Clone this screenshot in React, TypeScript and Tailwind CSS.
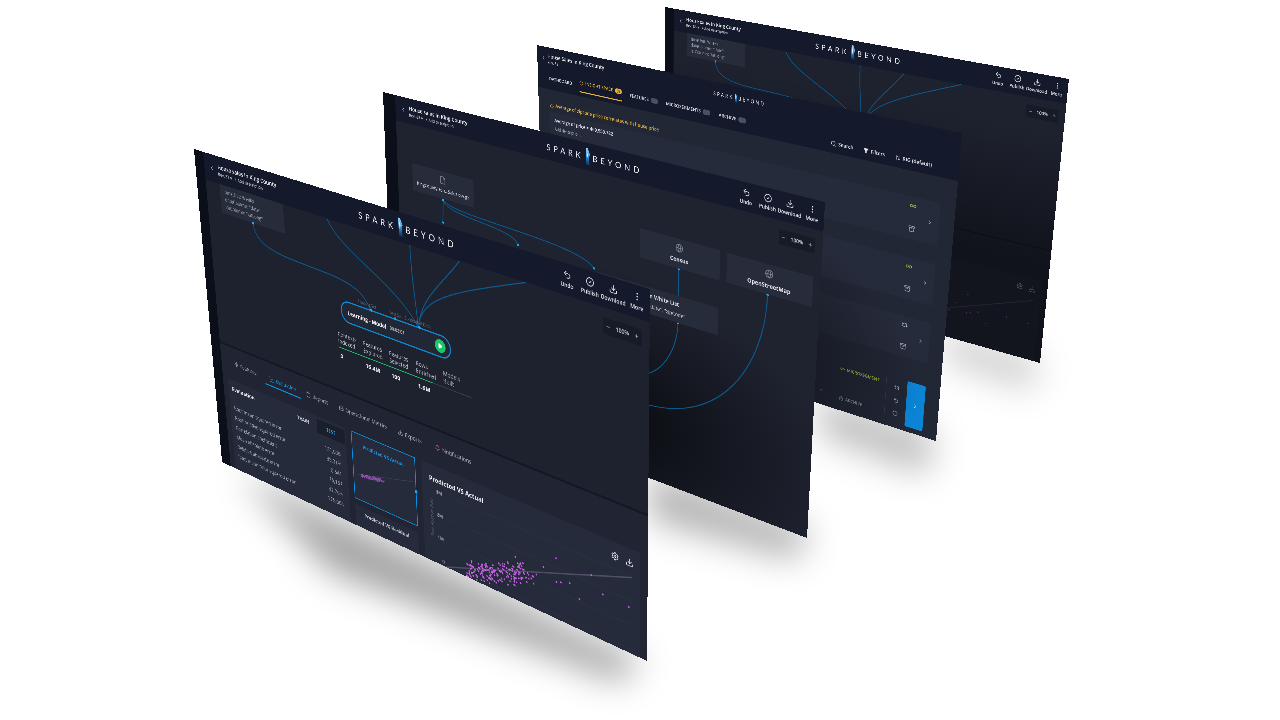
import type { ReactNode } from "react";
import {
  Archive, ArrowUpDown, Bell, ChartLine, ChevronDown, ChevronLeft, ChevronRight, CircleCheck, Clipboard,
  Diamond, Download, EllipsisVertical, File, Funnel, Globe, HardDrive, Infinity as Loop, Minus, Play, Plus,
  Repeat2, RotateCcw, Search, Settings, Undo2, Zap,
} from "lucide-react";

type Pt = [number, number];

// maps the 1280x800 screen on to four corners of the picture
function quadMatrix([p0, p1, p2, p3]: Pt[]) {
  const sx = p0[0] - p1[0] + p2[0] - p3[0];
  const sy = p0[1] - p1[1] + p2[1] - p3[1];
  const dx1 = p1[0] - p2[0];
  const dx2 = p3[0] - p2[0];
  const dy1 = p1[1] - p2[1];
  const dy2 = p3[1] - p2[1];
  const det = dx1 * dy2 - dx2 * dy1;
  const g = (sx * dy2 - dx2 * sy) / det;
  const h = (dx1 * sy - sx * dy1) / det;
  const a = p1[0] - p0[0] + g * p1[0];
  const b = p3[0] - p0[0] + h * p3[0];
  const d = p1[1] - p0[1] + g * p1[1];
  const e = p3[1] - p0[1] + h * p3[1];
  const m = [a / 1280, d / 1280, 0, g / 1280, b / 800, e / 800, 0, h / 800, 0, 0, 1, 0, p0[0], p0[1], 0, 1];
  return `matrix3d(${m.join(",")})`;
}

function noise(i: number, k: number) {
  const v = Math.sin(i * k) * 43758.5453;
  return v - Math.floor(v);
}

const cloud = Array.from({ length: 190 }, (_, i) => {
  const x = 96 + ((noise(i + 1, 12.9898) * 3 + noise(i + 1, 4.1414)) / 4) * 232;
  const y = 240 - 0.35 * (x - 62) + 8 + (noise(i + 1, 78.233) + noise(i + 1, 37.719) - 1) * 30;
  return [x, y];
});

const outliers = [
  [262, 136], [372, 96], [463, 99], [372, 152], [384, 148], [407, 140], [432, 168], [492, 132], [557, 134], [338, 130],
];

const rows = [
  ["Root mean squared error", "131,056"],
  ["Root relative squared error", "35.31%"],
  ["Correlation coefficient", "0.541"],
  ["Mean absolute error", "76,167"],
  ["Relative absolute error", "32.76%"],
  ["Root mean prior squared error", "175,064"],
];

const stats = [
  ["Contexts", "Indexed", "3"],
  ["Features", "Explored", "16.4M"],
  ["Features", "Selected", "100"],
  ["Rows", "Enriched", "1.6M"],
  ["Models", "Built", ""],
];

function Logo({ small }: { small?: boolean }) {
  const text = small ? "text-[13px] tracking-[4.5px]" : "text-[22px] tracking-[8.5px]";
  return (
    <div className={`flex items-center justify-center font-normal text-[#eef0f5] [font-family:Lato,sans-serif] ${text}`}>
      <span>SPARK</span>
      <svg viewBox="0 0 14 40" className={small ? "mx-[3px] h-[22px] w-[8px]" : "mx-[5px] h-[40px] w-[16px]"}>
        <defs>
          <linearGradient id="mark" x1="0" y1="0" x2="0" y2="1">
            <stop offset="0" stopColor="#9fd8ff" />
            <stop offset="0.55" stopColor="#2a86d8" />
            <stop offset="1" stopColor="#12304f" />
          </linearGradient>
        </defs>
        <path d="M1 0h5l7 14-3 8 2 18H1z" fill="url(#mark)" />
        <path d="M3 6l4 10-3 10z" fill="#e8f5ff" />
      </svg>
      <span>BEYOND</span>
    </div>
  );
}

function Action({ icon, label }: { icon: ReactNode; label: string }) {
  return (
    <div className="flex w-[55px] flex-col items-center gap-[3px] text-[12px] font-semibold text-[#e6e9f0]">
      {icon}
      <span>{label}</span>
    </div>
  );
}

function AppHeader() {
  return (
    <div className="relative z-10 grid h-[66px] shrink-0 grid-cols-[1fr_auto_1fr] items-center bg-[#141a2b] pl-[18px] pr-[2px]">
      <div className="flex items-center gap-[12px]">
        <ChevronLeft size={16} className="text-[#c9ced8]" />
        <div>
          <div className="text-[15px] font-semibold leading-[20px] text-[#eef0f5]">House sales in King County</div>
          <div className="flex gap-[10px] text-[11px] font-semibold leading-[16px] text-[#c3c8d2]">
            <span>Rev. 83 ▾</span>
            <span>+ Add description</span>
          </div>
        </div>
      </div>
      <Logo />
      <div className="flex justify-end">
        <Action icon={<Undo2 size={20} />} label="Undo" />
        <Action icon={<CircleCheck size={20} />} label="Publish" />
        <Action icon={<Download size={20} />} label="Download" />
        <Action icon={<EllipsisVertical size={20} />} label="More" />
      </div>
    </div>
  );
}

function ZoomControl() {
  return (
    <div className="absolute right-[18px] top-[20px] flex h-[34px] w-[90px] items-center justify-between rounded bg-[#171b28] px-[6px] text-[12px] font-semibold text-[#cfd3dc]">
      <Minus size={12} />
      <span>100%</span>
      <Plus size={12} />
    </div>
  );
}

function Tab({ width, active, icon, label }: { width: string; active?: boolean; icon: ReactNode; label: string }) {
  return (
    <div
      className={`flex h-[36px] items-center justify-center gap-[6px] border-b-[3px] text-[14px] font-medium ${width} ${
        active ? "border-[#0f8fdc] text-[#1b9be6]" : "border-transparent text-[#a8aebb]"
      }`}
    >
      {icon}
      {label}
    </div>
  );
}

function MiniChart() {
  return (
    <svg viewBox="0 0 192 166" className="absolute inset-0 h-full w-full">
      <line x1="10" y1="103" x2="186" y2="60" stroke="#3f4254" strokeWidth="1.5" />
      {cloud.map(([x, y], i) => (
        <circle key={i} cx={15 + (x - 102) * 0.38} cy={96 + (y - 190) * 0.18} r="1.2" fill="#9a50b8" />
      ))}
    </svg>
  );
}

function BigChart() {
  return (
    <svg viewBox="0 0 584 240" className="absolute inset-0 h-full w-full">
      {[["3M", 62], ["2M", 118], ["1M", 174], ["0", 230]].map(([label, y]) => (
        <g key={label}>
          <text x="58" y={Number(y) + 4} textAnchor="end" fill="#a8aebb" fontSize="12" fontWeight="600">{label}</text>
          <line x1="76" x2="572" y1={y} y2={y} stroke="#313648" strokeWidth="1" />
        </g>
      ))}
      <text transform="translate(30 130) rotate(-90)" textAnchor="middle" fill="#5d6374" fontSize="12" fontStyle="italic">
        True Positive Rate
      </text>
      <line x1="62" y1="240" x2="564" y2="64" stroke="#4f5064" strokeWidth="3" />
      {cloud.concat(outliers).map(([x, y], i) => (
        <circle key={i} cx={x} cy={y} r="2.2" fill="#c65fe6" />
      ))}
    </svg>
  );
}

function ModelScreen({ dim }: { dim?: boolean }) {
  return (
    <div className="relative flex h-full w-full bg-[#1e222f]">
      <div className="w-[32px] shrink-0 bg-[#0b0f1a]" />
      <div className="flex min-w-0 flex-1 flex-col">
        <AppHeader />
        <div className="relative h-[402px] shrink-0 overflow-hidden">
          <div className="absolute left-[48px] top-0 h-[69px] w-[210px] rounded-b bg-[#272c3b] px-[15px] pt-[6px] text-[13px] font-medium leading-[18px] text-[#9aa0af]">
            <div>timeUnit: Weeks</div>
            <div>dateColumn: "date"</div>
            <div>latColumn: "latLong"</div>
          </div>
          <svg viewBox="32 66 1248 402" className="absolute inset-0 h-full w-full" fill="none" stroke="#0c5a8e" strokeWidth="2.5">
            <path d="M185 135C190 200 300 190 420 195C490 198 530 210 545 245" />
            <path d="M428 66C460 130 620 160 686 245" />
            <path d="M672 66C672 130 682 190 686 245" />
            <path d="M809 66C760 130 700 170 686 245" />
            <path d="M983 66C800 135 700 170 686 245" />
            <rect x="182" y="132" width="6" height="6" fill="#16a8f5" stroke="none" />
          </svg>
          <div className="absolute left-[422px] top-[179px] flex h-[52px] w-[323px] items-center gap-[10px] rounded-full border-[3px] border-[#0b8ad8] bg-[#222736] pl-[18px] pr-[12px]">
            <span className="text-[14px] font-bold text-[#eef0f5]">Learning - Model</span>
            <span className="text-[11px] font-semibold text-[#c3c8d2]">00:02:01</span>
            <span className="ml-auto flex h-[30px] w-[30px] items-center justify-center rounded-full bg-[#1ec26b]">
              <Play size={14} fill="#ffffff" stroke="#ffffff" />
            </span>
            <i className="absolute left-[88px] top-[-6px] h-[7px] w-[7px] rounded-sm bg-[#16a8f5]" />
            <i className="absolute left-[159px] top-[-6px] h-[7px] w-[7px] rounded-sm bg-[#16a8f5]" />
            <i className="absolute left-[229px] top-[-6px] h-[7px] w-[7px] rounded-sm bg-[#16a8f5]" />
            <span className="absolute left-[52px] top-[-20px] text-[10px] text-[#6b7280]">Training Set</span>
            <span className="absolute left-[146px] top-[-20px] text-[10px] text-[#6b7280]">Test Set</span>
            <span className="absolute left-[190px] top-[-20px] text-[10px] text-[#6b7280]">Contextual Data</span>
          </div>
          <div className="absolute left-[408px] top-[256px] w-[390px]">
            <div className="grid grid-cols-5 text-[14px] font-medium leading-[17px] text-[#c3c8d2]">
              {stats.map(([a, b], i) => (
                <div key={i}>{a}<br />{b}</div>
              ))}
            </div>
            <div className="mt-[6px] h-[2px] bg-[#3a3f4e]">
              <div className="h-full w-[282px] bg-[#1ec26b]" />
            </div>
            <div className="mt-[7px] grid grid-cols-5 text-[15px] font-bold text-[#eef0f5]">
              {stats.map(([, , v], i) => (
                <div key={i} className="pl-[4px]">{v}</div>
              ))}
            </div>
          </div>
          <ZoomControl />
        </div>
        <div className="flex min-h-0 flex-1 flex-col border-t-[5px] border-[#141824] bg-[#202433]">
          <div className="flex pl-[17px] pt-[24px]">
            <Tab width="w-[136px]" icon={<Zap size={15} />} label="Features" />
            <Tab width="w-[120px]" active icon={<ChartLine size={16} />} label="Evaluation" />
            <Tab width="w-[108px]" icon={<Clipboard size={15} />} label="Reports" />
            <Tab width="w-[182px]" icon={<HardDrive size={15} />} label="Operational Metrics" />
            <Tab width="w-[102px]" icon={<Download size={15} />} label="Exports" />
            <Tab width="w-[150px]" icon={<Bell size={15} className="text-[#e0566b]" />} label="Notifications" />
          </div>
          <div className="mt-[27px] flex min-h-0 flex-1 gap-[18px] pl-[18px] pr-[18px]">
            <div className="w-[395px] shrink-0 bg-[#262b3b]">
              <div className="flex h-[60px] items-start justify-between pl-[12px] pr-[3px] pt-[7px]">
                <span className="mt-[4px] text-[15px] font-bold text-[#e6e9f0]">Evaluation</span>
                <div className="flex text-[13px] font-bold">
                  <span className="flex h-[36px] w-[90px] items-center justify-center text-[#c3c8d2]">TRAIN</span>
                  <span className="flex h-[36px] w-[90px] items-center justify-center bg-[#1b1f2c] text-[#1b9be6]">TEST</span>
                </div>
              </div>
              {rows.map(([label, value]) => (
                <div key={label} className="flex h-[25.7px] items-center justify-between pl-[14px] pr-[20px] text-[14px] font-medium text-[#a8aebb]">
                  <span>{label}</span>
                  <span>{value}</span>
                </div>
              ))}
            </div>
            <div className="flex w-[196px] shrink-0 flex-col gap-[15px]">
              <div className="relative h-[170px] shrink-0 border-2 border-[#0b8fe0] bg-[#262b3b]">
                <MiniChart />
                <div className="relative pt-[18px] text-center text-[13px] font-bold text-[#1c93e0]">Predicted VS Actual</div>
                <i className="absolute right-[-5px] top-[78px] h-[8px] w-[8px] rounded-full bg-[#16a8f5]" />
              </div>
              <div className="flex-1 bg-[#262b3b] pt-[10px] text-center text-[13px] font-bold text-[#c3c8d2]">Predicted VS Residual</div>
            </div>
            <div className="relative flex-1 bg-[#262b3b]">
              <BigChart />
              <div className="relative pl-[22px] pt-[22px] text-[16px] font-bold text-[#eef0f5]">Predicted VS Actual</div>
              <div className="absolute right-[16px] top-[22px] flex gap-[16px] text-[#e6e9f0]">
                <Settings size={20} />
                <Download size={20} />
              </div>
            </div>
          </div>
        </div>
      </div>
      {dim && <div className="absolute inset-x-0 bottom-0 top-[66px] bg-[linear-gradient(to_bottom,transparent_10%,rgba(10,11,16,0.68)_62%)]" />}
    </div>
  );
}

function SourceCard({ className, children }: { className: string; children: ReactNode }) {
  return (
    <div className={`absolute flex flex-col items-center justify-center gap-[6px] rounded bg-[#272c3b] text-[14px] ${className}`}>
      {children}
    </div>
  );
}

function DataScreen() {
  return (
    <div className="relative flex h-full w-full bg-[#1f2330]">
      <div className="w-[42px] shrink-0 bg-[#0b0f1a]" />
      <div className="flex min-w-0 flex-1 flex-col">
        <AppHeader />
        <div className="relative flex-1 overflow-hidden">
          <div className="absolute inset-0 bg-[radial-gradient(ellipse_50%_52%_at_56%_82%,rgba(8,9,13,0.9),transparent)]" />
          <svg viewBox="42 66 1238 734" className="absolute inset-0 h-full w-full" fill="none" stroke="#0c5a8e" strokeWidth="2.5">
            <path d="M196 243L193 303" />
            <path d="M196 243C210 285 420 260 439 303" />
            <path d="M196 243C230 280 620 250 672 304" />
            <path d="M914 244V310" />
            <path d="M915 376C915 440 880 500 838 525C760 570 640 580 500 560" />
            <path d="M1150 243C1150 420 1040 590 840 608C740 616 620 600 500 590" />
            <g fill="#16a8f5" stroke="none">
              <rect x="193" y="240" width="6" height="6" />
              <rect x="191" y="301" width="5" height="5" />
              <rect x="437" y="301" width="5" height="5" />
              <rect x="670" y="302" width="5" height="5" />
              <rect x="911" y="241" width="6" height="6" />
              <rect x="912" y="373" width="6" height="6" />
              <rect x="1147" y="240" width="6" height="6" />
            </g>
          </svg>
          <SourceCard className="left-[51px] top-[102px] h-[72px] w-[205px] font-medium text-[#e6e9f0]">
            <File size={22} className="text-[#7c8292]" />
            <span className="text-[13px]">KingCountyHou...Sales.csv.gz</span>
          </SourceCard>
          <SourceCard className="left-[762px] top-[106px] h-[71px] w-[220px] font-bold text-[#e6e9f0]">
            <Globe size={22} className="text-[#7c8292]" />
            <span>Census</span>
          </SourceCard>
          <SourceCard className="left-[1000px] top-[107px] h-[70px] w-[220px] font-bold text-[#e6e9f0]">
            <Globe size={22} className="text-[#7c8292]" />
            <span>OpenStreetMap</span>
          </SourceCard>
          <SourceCard className="left-[640px] top-[244px] h-[66px] w-[342px] text-[#d6dae2]">
            <span className="font-bold">Column White List</span>
            <span className="text-[13px] font-medium">Columns: "date", "zipCode"</span>
          </SourceCard>
          <ZoomControl />
        </div>
      </div>
    </div>
  );
}

function InsightRow({ first, top, children }: { first: ReactNode; top: string; children?: ReactNode }) {
  return (
    <div className={`relative flex h-[108px] shrink-0 items-start rounded bg-[#262b3b] pl-[15px] ${top}`}>
      <div className="pt-[10px]">{children}</div>
      <div className="ml-auto mr-[62px] flex h-full flex-col items-center justify-between pb-[18px] pt-[14px] text-[#a8aebb]">
        {first}
        <Archive size={18} />
      </div>
      <ChevronRight size={16} className="absolute right-[16px] top-[46px] text-[#a8aebb]" />
    </div>
  );
}

function InsightScreen() {
  return (
    <div className="relative flex h-full w-full flex-col bg-[#222736]">
      <div className="h-[116px] shrink-0 bg-[#141a2b]">
        <div className="grid h-[62px] grid-cols-[1fr_auto_1fr] items-center pl-[14px]">
          <div className="flex items-center gap-[6px]">
            <ChevronLeft size={16} className="text-[#c9ced8]" />
            <div>
              <div className="text-[15px] font-semibold leading-[20px] text-[#eef0f5]">House Sales in King County</div>
              <div className="text-[11px] font-semibold leading-[16px] text-[#c3c8d2]">Rev. 32</div>
            </div>
          </div>
          <div className="pl-[30px]"><Logo small /></div>
        </div>
        <div className="flex h-[54px] items-start pl-[40px] pr-[70px] text-[13px] font-semibold text-[#d6dae2]">
          <div className="flex items-center gap-[26px]">
            <span className="h-[40px] pt-[12px]">DASHBOARD</span>
            <span className="flex h-[43px] items-center gap-[6px] border-b-[3px] border-[#e6b33d] pb-[7px] text-[#e6b33d]">
              <Diamond size={14} />
              INSIGHT SPACE
              <span className="rounded-full bg-[#e6b33d] px-[6px] text-[10px] leading-[14px] text-[#141a2b]">36</span>
            </span>
            <span className="flex h-[40px] items-center gap-[6px]">FEATURES<i className="h-[14px] w-[24px] rounded-full bg-[#4a5062]" /></span>
            <span className="flex h-[40px] items-center gap-[6px]">MICROSEGMENTS<i className="h-[14px] w-[24px] rounded-full bg-[#4a5062]" /></span>
            <span className="flex h-[40px] items-center gap-[6px]">ARCHIVE<i className="h-[14px] w-[24px] rounded-full bg-[#4a5062]" /></span>
          </div>
          <div className="ml-auto flex h-[60px] items-center gap-[28px] font-semibold text-[#e6e9f0]">
            <span className="flex items-center gap-[6px]"><Search size={16} />Search</span>
            <span className="flex items-center gap-[6px]"><Funnel size={14} fill="#e6e9f0" />Filters</span>
            <span className="flex items-center gap-[6px]"><ArrowUpDown size={14} />RIG (default)</span>
          </div>
        </div>
      </div>
      <div className="flex min-h-0 flex-1 flex-col pl-[40px] pr-[40px]">
        <div className="flex h-[63px] shrink-0 items-end gap-[6px] pb-[10px] text-[14px] font-semibold text-[#e6b33d]">
          <Diamond size={14} />
          <span>Average of zipcode price correlates with house price</span>
        </div>
        <InsightRow top="" first={<Loop size={18} className="text-[#a5c73c]" />}>
          <div className="text-[14px] font-semibold text-[#e6e9f0]">Average of price = 469,959.782</div>
          <div className="mt-[6px] text-[12px] font-medium text-[#a8aebb]">Add description...</div>
        </InsightRow>
        <InsightRow top="mt-[47px]" first={<Loop size={18} className="text-[#a5c73c]" />} />
        <InsightRow top="mt-[47px]" first={<Repeat2 size={18} />} />
        <div className="mb-[14px] mt-auto flex h-[126px] items-stretch justify-end">
          <ChevronDown size={14} className="mr-[46px] mt-[92px] text-[#7c8292]" />
          <div className="flex w-[128px] flex-col justify-center gap-[66px] text-[12px] font-semibold">
            <span className="flex items-center gap-[6px] whitespace-nowrap text-[#a5c73c]"><Loop size={14} />MICROSEGMENT</span>
            <span className="flex items-center gap-[6px] text-[#8c93a3]"><Archive size={14} />ARCHIVE</span>
          </div>
          <div className="ml-[7px] flex w-[60px] flex-col items-center justify-center gap-[20px] border-l border-[#3a3f4e] text-[#a8aebb]">
            <Repeat2 size={16} />
            <Undo2 size={16} />
            <RotateCcw size={16} />
          </div>
          <div className="flex w-[51px] items-center justify-center rounded bg-[#0b84d6] text-[#cfe8fa]">
            <ChevronRight size={16} />
          </div>
        </div>
      </div>
      <div className="absolute inset-x-0 bottom-0 top-[116px] bg-[radial-gradient(ellipse_58%_60%_at_38%_84%,rgba(8,9,13,0.92),transparent)]" />
    </div>
  );
}

function Screen({ quad, children }: { quad: Pt[]; children: ReactNode }) {
  return (
    <div
      className="absolute left-0 top-0 h-[800px] w-[1280px] origin-top-left overflow-hidden"
      style={{ transform: quadMatrix(quad) }}
    >
      {children}
    </div>
  );
}

export default function App() {
  return (
    <div className="relative h-[720px] w-[1280px] overflow-hidden bg-white [font-family:'Open_Sans',sans-serif]">
      <svg viewBox="0 0 1280 720" className="absolute inset-0 h-full w-full">
        <defs>
          <filter id="soft" x="-30%" y="-30%" width="160%" height="160%">
            <feGaussianBlur stdDeviation="17" />
          </filter>
        </defs>
        <g filter="url(#soft)" fill="#000000">
          <polygon points="240,472 640,660 620,682 330,572" opacity="0.36" />
          <polygon points="650,470 810,530 795,560 650,520" opacity="0.3" />
          <polygon points="820,395 936,435 925,475 820,435" opacity="0.26" />
          <polygon points="945,330 1040,360 1030,390 945,360" opacity="0.2" />
        </g>
      </svg>
      <div className="absolute inset-0 blur-[0.4px]">
        <Screen quad={[[665, 7], [1069, 79], [1040, 363], [665, 257]]}><ModelScreen dim /></Screen>
        <Screen quad={[[537, 45], [962, 133], [936, 441], [545, 316]]}><InsightScreen /></Screen>
        <Screen quad={[[383, 92], [825, 202], [807, 538], [394, 381]]}><DataScreen /></Screen>
        <Screen quad={[[194, 149], [650, 289], [647, 661], [222, 462]]}><ModelScreen /></Screen>
      </div>
    </div>
  );
}
